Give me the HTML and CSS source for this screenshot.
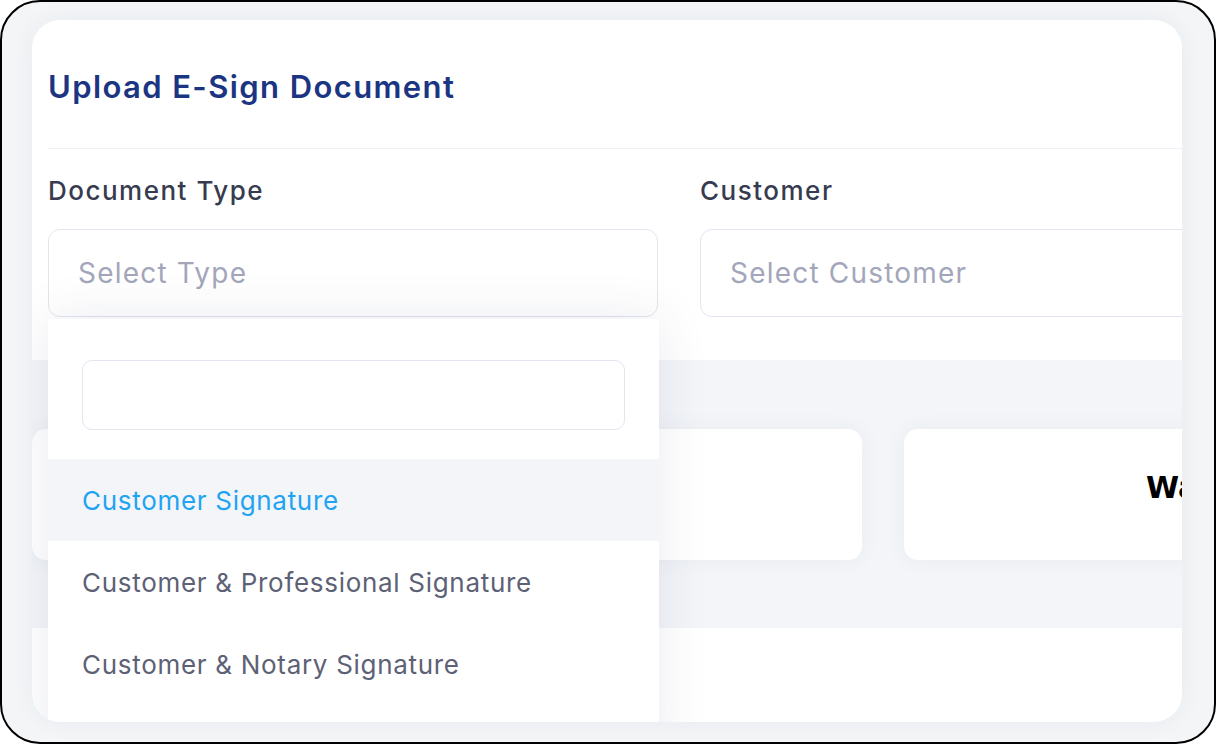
FILE: index.html
```html
<!DOCTYPE html>
<html lang="en">
<head>
<meta charset="utf-8">
<title>Upload E-Sign Document</title>
<link rel="stylesheet" href="styles.css">
</head>
<body>
<div class="frame">
  <div class="card">
    <div class="content">
      <header class="head">
        <h1 class="title">Upload E-Sign Document</h1>
      </header>
      <div class="form-row">
        <div class="field">
          <div class="label">Document Type</div>
          <div class="select"><span class="placeholder">Select Type</span></div>
        </div>
        <div class="field">
          <div class="label">Customer</div>
          <div class="select"><span class="placeholder">Select Customer</span></div>
        </div>
      </div>
      <section class="stats">
        <div class="stat"></div>
        <div class="stat stat-text">Waiting for Signature</div>
      </section>
    </div>
    <div class="dropdown">
      <div class="search-wrap"><div class="search"></div></div>
      <ul class="options">
        <li class="option active">Customer Signature</li>
        <li class="option">Customer &amp; Professional Signature</li>
        <li class="option">Customer &amp; Notary Signature</li>
      </ul>
    </div>
  </div>
</div>
</body>
</html>
```

FILE: styles.css
```css
* { box-sizing: border-box; }
html, body { margin: 0; padding: 0; background: #ffffff; }
body { font-family: Inter, "Noto Sans", "Liberation Sans", sans-serif; }

.frame {
  width: 1216px;
  height: 744px;
  border: 2px solid #000;
  border-radius: 40px;
  background: #f3f5f7;
  overflow: hidden;
  padding: 18px 0 0 30px;
}

.card {
  position: relative;
  width: 1150px;
  height: 702px;
  background: #fff;
  border-radius: 28px;
  overflow: hidden;
  box-shadow: 0 0 24px rgba(40, 50, 80, 0.05);
}

.content {
  width: 1500px;
  padding-left: 16px;
}

.head {
  padding: 49px 0 43px;
  border-bottom: 1px solid #edf0f4;
}

.title {
  margin: 0;
  font-size: 31px;
  line-height: 36px;
  font-weight: 600;
  letter-spacing: 1.4px;
  color: #1b3582;
}

.form-row {
  display: flex;
  gap: 42px;
  padding-top: 27px;
}

.field { width: 610px; }

.label {
  font-size: 26px;
  line-height: 30px;
  font-weight: 500;
  letter-spacing: 1.5px;
  color: #373b4f;
  margin-bottom: 23px;
}

.select {
  height: 88px;
  border: 1px solid #e3e4ef;
  border-radius: 12px;
  padding-left: 29px;
  display: flex;
  align-items: center;
}

.placeholder {
  font-size: 28px;
  letter-spacing: 1.2px;
  color: #a3a6ba;
}

.stats {
  margin: 43px 0 0 -16px;
  background: #f3f5f8;
  padding: 69px 0 68px;
  display: flex;
  gap: 42px;
}

.stat {
  width: 830px;
  height: 131px;
  background: #fff;
  border-radius: 14px;
  box-shadow: 0 0 22px rgba(60, 70, 110, 0.05);
  flex: none;
}

.stat-text {
  padding: 41px 0 0 242px;
  font-family: "DejaVu Sans", Verdana, sans-serif;
  font-weight: 700;
  font-size: 30px;
  line-height: 36px;
  color: #000;
  white-space: nowrap;
}

.dropdown {
  position: absolute;
  left: 16px;
  top: 299px;
  width: 611px;
  height: 440px;
  background: #fff;
  box-shadow: 0 0 48px rgba(50, 55, 100, 0.10);
}

.search-wrap { padding: 41px 34px 29px; }

.search {
  height: 70px;
  border: 1px solid #e3e5ef;
  border-radius: 10px;
}

.options { list-style: none; margin: 0; padding: 0; }

.option {
  height: 82px;
  display: flex;
  align-items: center;
  padding-left: 34px;
  font-size: 26px;
  letter-spacing: 0.7px;
  color: #5d6175;
}

.option.active {
  background: #f4f5f8;
  color: #1ea4f3;
}
```
